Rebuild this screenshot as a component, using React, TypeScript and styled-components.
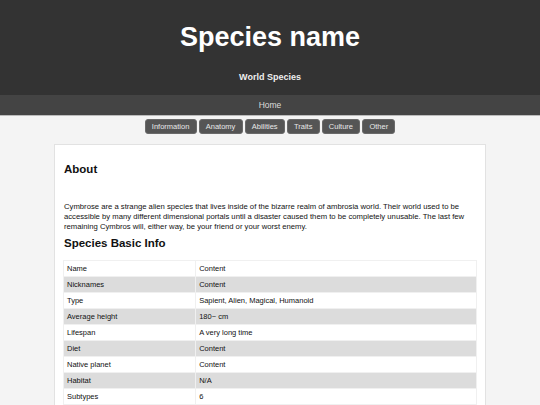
import styled, { createGlobalStyle } from 'styled-components'

const GlobalStyle = createGlobalStyle`
	body {
		margin: 0;
		background: #f4f4f4;
		font-family: 'Liberation Sans', Arial, sans-serif;
		color: #111;
	}
`

const Header = styled.header`
	background: #333;
	color: #fff;
	text-align: center;
	padding: 22px 0 12px;
`

const Title = styled.h1`
	margin: 0;
	font-size: 27px;
	line-height: 31px;
	font-weight: bold;
`

const Subtitle = styled.p`
	margin: 18px 0 0;
	font-size: 9px;
	line-height: 12px;
	font-weight: bold;
	color: #eee;
`

const Nav = styled.nav`
	background: #444;
	height: 20px;
	line-height: 20px;
	text-align: center;
	font-size: 8.5px;
	color: #ddd;
	border-bottom: 1px solid #bbb;
`

const Tabs = styled.div`
	display: flex;
	justify-content: center;
	gap: 2px;
	margin-top: 3px;
`

const Tab = styled.button`
	height: 15px;
	padding: 0 6.2px;
	background: #555;
	color: #e8e8e8;
	border: 1px solid #6a6a6a;
	border-radius: 3px;
	font-family: inherit;
	font-size: 7.5px;
	line-height: 13px;
`

const Card = styled.main`
	width: 80%;
	margin: 10px auto 0;
	box-sizing: border-box;
	background: #fff;
	border: 1px solid #e2e2e2;
	padding: 17px 8px 20px;
`

const Heading = styled.h2`
	margin: 0 0 0 1px;
	font-size: 11.5px;
	line-height: 14px;
	font-weight: bold;
`

const Text = styled.p<{ $top?: number }>`
	margin: ${p => p.$top ?? 0}px 0 4px 1px;
	font-size: 7.7px;
	line-height: 10px;
	color: #111;
`

const Table = styled.table`
	width: 100%;
	margin-top: 10px;
	border-collapse: collapse;
	font-size: 7.5px;
	color: #111;
`

const Row = styled.tr<{ $shade: boolean }>`
	background: ${p => (p.$shade ? '#dcdcdc' : '#fff')};
`

const Cell = styled.td<{ $label?: boolean }>`
	height: 16px;
	padding: 0 3px;
	box-sizing: border-box;
	border: 1px solid #f0f0f0;
	width: ${p => (p.$label ? '32%' : 'auto')};
`

const rows: [string, string][] = [
	['Name', 'Content'],
	['Nicknames', 'Content'],
	['Type', 'Sapient, Alien, Magical, Humanoid'],
	['Average height', '180~ cm'],
	['Lifespan', 'A very long time'],
	['Diet', 'Content'],
	['Native planet', 'Content'],
	['Habitat', 'N/A'],
	['Subtypes', '6'],
]

const tabs = ['Information', 'Anatomy', 'Abilities', 'Traits', 'Culture', 'Other']

export default function App() {
	return (
		<>
			<GlobalStyle />
			<Header>
				<Title>Species name</Title>
				<Subtitle>World Species</Subtitle>
			</Header>
			<Nav>Home</Nav>
			<Tabs>
				{tabs.map(t => (
					<Tab key={t}>{t}</Tab>
				))}
			</Tabs>
			<Card>
				<Heading>About</Heading>
				<Text $top={26}>
					Cymbrose are a strange alien species that lives inside of the bizarre realm of
					ambrosia world. Their world used to be accessible by many different dimensional
					portals until a disaster caused them to be completely unusable. The last few
					remaining Cymbros will, either way, be your friend or your worst enemy.
				</Text>
				<Heading>Species Basic Info</Heading>
				<Table>
					<tbody>
						{rows.map(([k, v], i) => (
							<Row key={k} $shade={i % 2 === 1}>
								<Cell $label>{k}</Cell>
								<Cell>{v}</Cell>
							</Row>
						))}
					</tbody>
				</Table>
			</Card>
		</>
	)
}
